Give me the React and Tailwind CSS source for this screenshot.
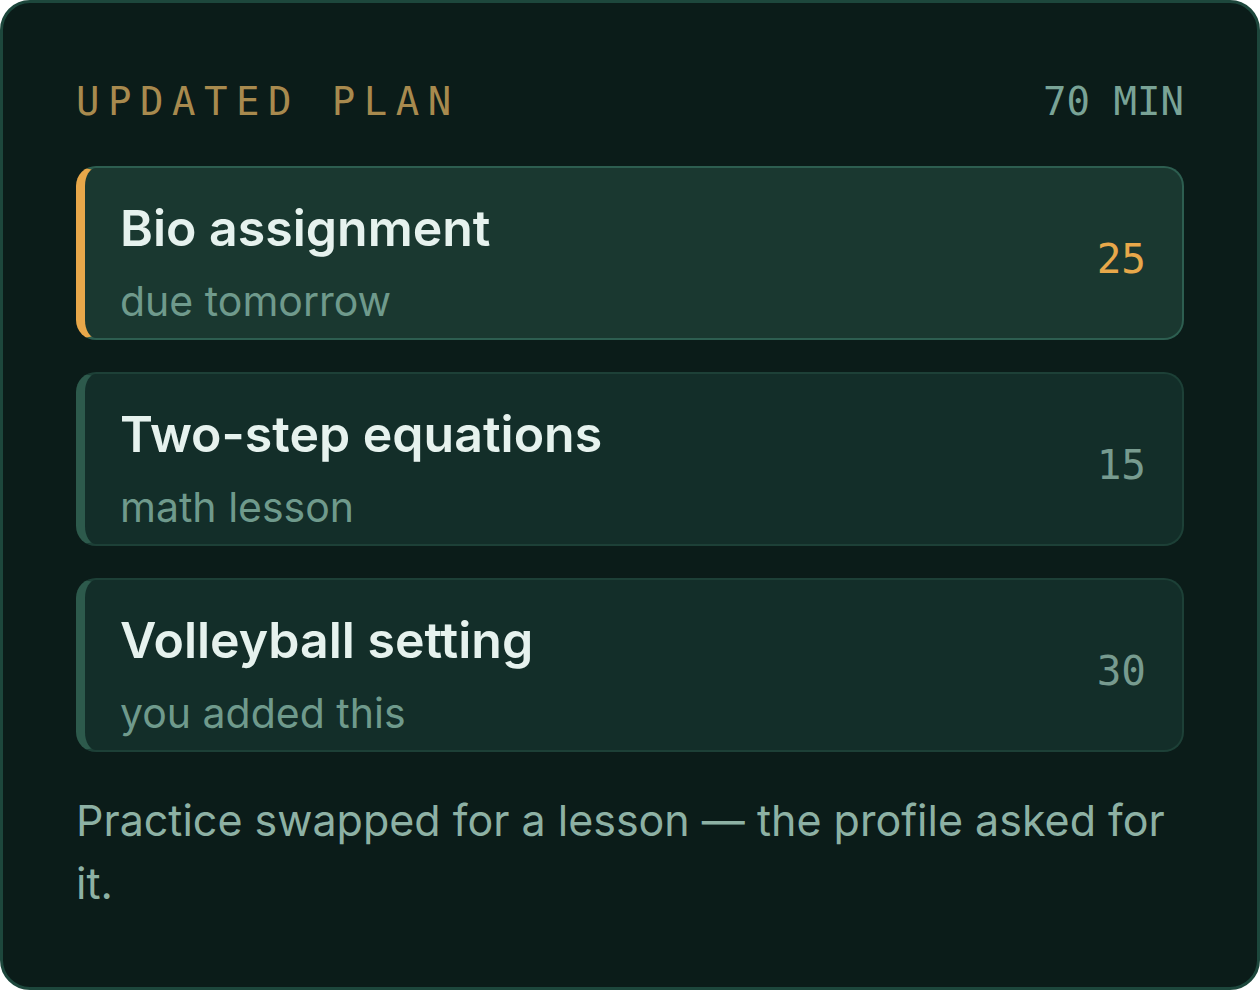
export default function App() {
    const rows = [
        { title: 'Bio assignment', note: 'due tomorrow', min: 25, active: true },
        { title: 'Two-step equations', note: 'math lesson', min: 15 },
        { title: 'Volleyball setting', note: 'you added this', min: 30 },
    ];

    const mono = { fontFamily: '"DejaVu Sans Mono", "Liberation Mono", monospace' };

    return (
        <div className="w-[1260px] h-[990px] bg-white" style={{ fontFamily: 'Inter, "Noto Sans", sans-serif' }}>
            <div className="h-full rounded-[30px] border-[3px] border-[#1d473c] bg-[#0b1c19] px-[73px] pt-[79px]">
                <div className="flex items-center justify-between h-[40px] leading-[40px] mb-[44px] text-[39px]" style={mono}>
                    <span className="text-[#a88a4e] tracking-[8.5px]">UPDATED PLAN</span>
                    <span className="text-[#79a396]">70 MIN</span>
                </div>

                <div className="flex flex-col gap-[32px]">
                    {rows.map((r) => (
                        <div
                            key={r.title}
                            className={
                                r.active
                                    ? 'h-[174px] flex justify-between rounded-[20px] border-2 border-l-[9px] border-[#2d5e50] border-l-[#e8a84a] bg-[#1a3830] pl-[35px] pr-[36px]'
                                    : 'h-[174px] flex justify-between rounded-[20px] border-2 border-l-[9px] border-[#1d4037] border-l-[#2d5a4c] bg-[#132e29] pl-[35px] pr-[36px]'
                            }
                        >
                            <div className="flex flex-col pt-[29px]">
                                <span className="text-[50px] leading-[62px] font-semibold text-[#e6f2ee]">{r.title}</span>
                                <span className="mt-[14px] text-[41px] leading-[56px] text-[#6f9a8c]">{r.note}</span>
                            </div>
                            <span
                                className={'self-center text-[41px] pt-[14px] ' + (r.active ? 'text-[#e8a84a]' : 'text-[#779b8f]')}
                                style={mono}
                            >
                                {r.min}
                            </span>
                        </div>
                    ))}
                </div>

                <p className="mt-[37px] text-[43px] leading-[63px] text-[#8db1a4]">
                    Practice swapped for a lesson — the profile asked for it.
                </p>
            </div>
        </div>
    );
}
